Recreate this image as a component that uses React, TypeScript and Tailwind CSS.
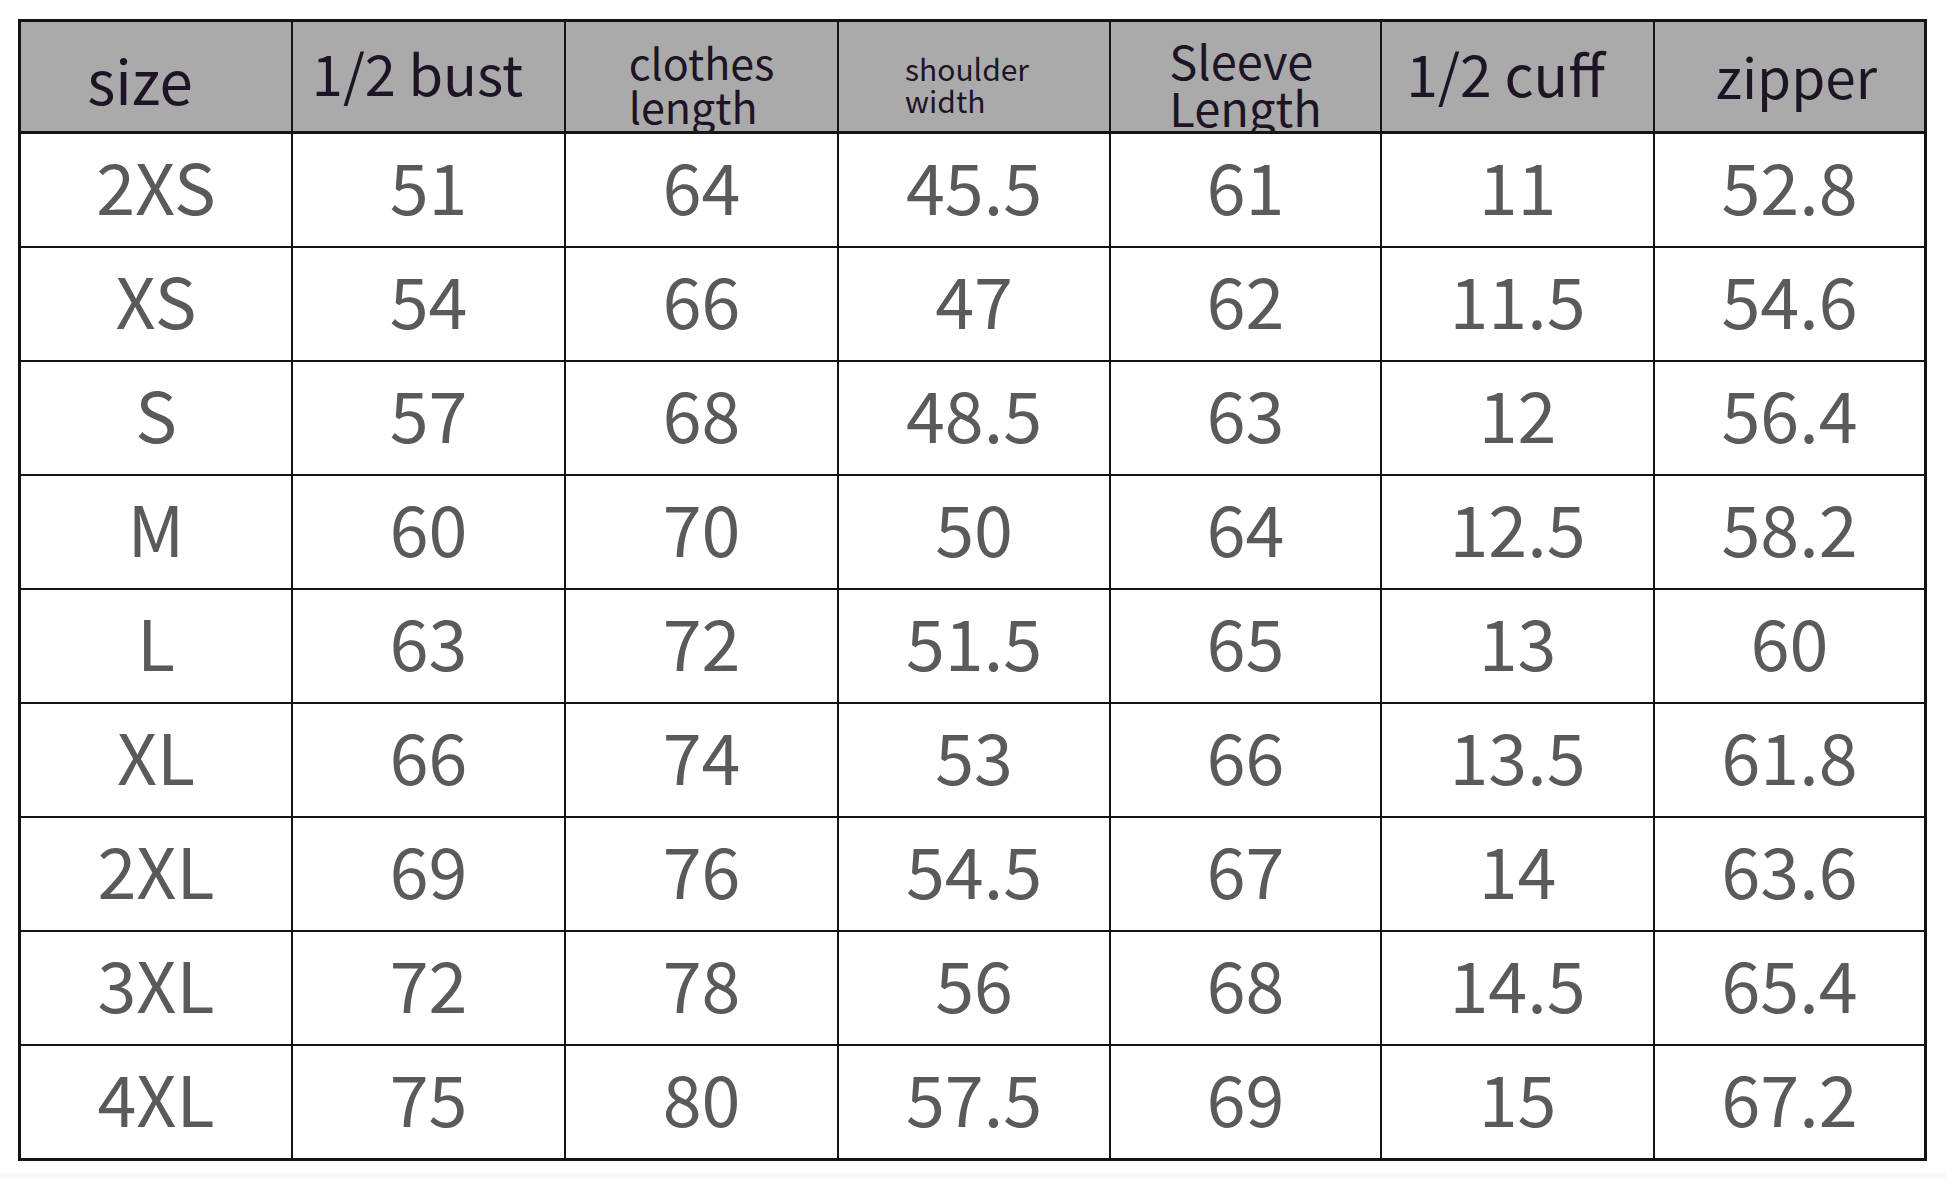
const headers = [
  { lines: ["size"], cls: "text-[60px] leading-none pt-[4px] pr-[32px]" },
  { lines: ["1/2 bust"], cls: "text-[56px] leading-none pb-[10px] pr-[22px]" },
  { lines: ["clothes", "length"], cls: "text-[43px] leading-[44px] pt-[12px]" },
  { lines: ["shoulder", "width"], cls: "text-[30px] leading-[32px] pt-[14px] pr-[14px]" },
  { lines: ["Sleeve", "Length"], cls: "text-[47px] leading-[47px] pt-[12px]" },
  { lines: ["1/2 cuff"], cls: "text-[57px] leading-none pb-[8px] pr-[24px]" },
  { lines: ["zipper"], cls: "text-[55px] leading-none pb-[2px] pl-[14px]" },
];

const rows = [
  ["2XS", "51", "64", "45.5", "61", "11", "52.8"],
  ["XS", "54", "66", "47", "62", "11.5", "54.6"],
  ["S", "57", "68", "48.5", "63", "12", "56.4"],
  ["M", "60", "70", "50", "64", "12.5", "58.2"],
  ["L", "63", "72", "51.5", "65", "13", "60"],
  ["XL", "66", "74", "53", "66", "13.5", "61.8"],
  ["2XL", "69", "76", "54.5", "67", "14", "63.6"],
  ["3XL", "72", "78", "56", "68", "14.5", "65.4"],
  ["4XL", "75", "80", "57.5", "69", "15", "67.2"],
];

export default function App() {
  return (
    <div className="w-[1946px] h-[1179px] bg-white pl-[18px] pt-[19px] font-['Noto_Sans_CJK_SC','Noto_Sans',sans-serif]">
      <div className="w-[1909px] border-[3px] border-[#141414] bg-[#141414] grid grid-cols-[270px_271px_271px_270px_269px_271px_269px] grid-rows-[110px_repeat(9,112px)] gap-[2px]">
        {headers.map((h, i) => (
          <div
            key={i}
            className="bg-[#a9aaa9] border-b border-[#141414] flex items-center justify-center text-[#1e1426]"
          >
            <p className={h.cls}>
              {h.lines[0]}
              {h.lines[1] && (
                <>
                  <br />
                  {h.lines[1]}
                </>
              )}
            </p>
          </div>
        ))}
        {rows.map((r) =>
          r.map((v, j) => (
            <div
              key={r[0] + j}
              className="bg-white flex items-center justify-center pb-[10px] text-[70px] leading-none text-[#5a5a5a]"
            >
              {v}
            </div>
          ))
        )}
      </div>
      <div className="mt-[12px] -ml-[18px] h-[6px] bg-[#f9f9f5]" />
    </div>
  );
}
